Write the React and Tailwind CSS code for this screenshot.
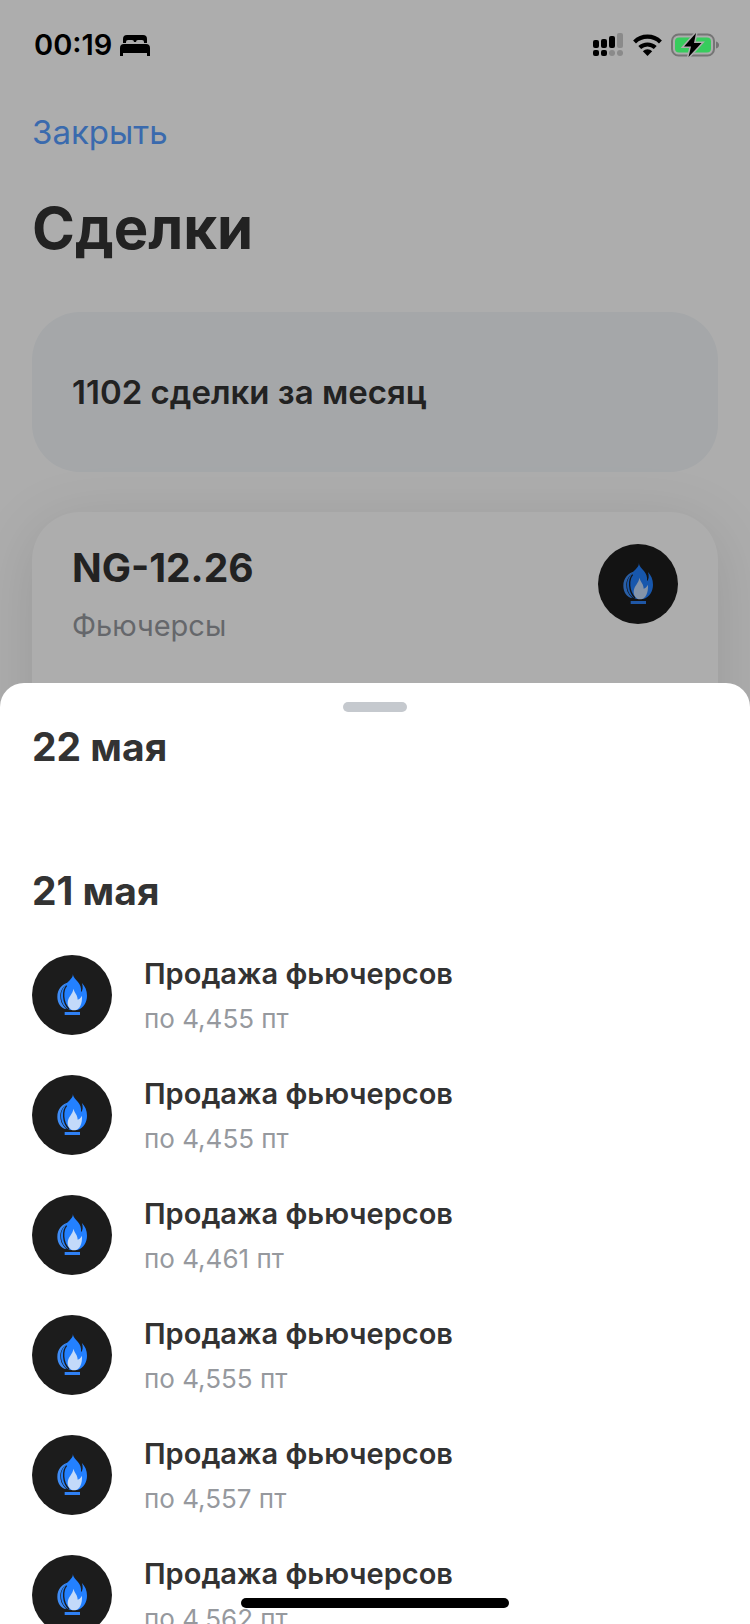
import React from 'react'

const deals = [
    { id: 1, title: 'Продажа фьючерсов', price: 'по 4,455 пт' },
    { id: 2, title: 'Продажа фьючерсов', price: 'по 4,455 пт' },
    { id: 3, title: 'Продажа фьючерсов', price: 'по 4,461 пт' },
    { id: 4, title: 'Продажа фьючерсов', price: 'по 4,555 пт' },
    { id: 5, title: 'Продажа фьючерсов', price: 'по 4,557 пт' },
    { id: 6, title: 'Продажа фьючерсов', price: 'по 4,562 пт' },
];

const GasLogo = () => (
    <svg viewBox="0 0 240 240" className="size-20 shrink-0" aria-hidden="true">
        <circle cx="120" cy="120" r="120" fill="#1c1c1c" />
        {/* outer tongue on the left */}
        <path d="M112 82C90 86 76 104 76 125C76 144 86 159 103 163C90 150 84 137 85 121C86 104 96 91 112 82Z" fill="#3f8cf5" />
        {/* main flame */}
        <path d="M122 57C127 74 88 86 87 122C87 143 98 160 116 165H136C154 159 165 142 165 122C165 106 159 94 150 84C154 97 152 107 147 112C151 82 127 78 122 57Z" fill="#2380ff" />
        <path d="M104 92C91 106 91 142 111 162" fill="none" stroke="#1c1c1c" strokeWidth="4" />
        {/* inner flame */}
        <path d="M124 101C123 117 107 126 107 144C107 155 114 163 122 166H130C143 162 151 148 150 122C146 129 142 133 137 134C137 120 128 114 124 101Z" fill="#c3dafa" />
        <rect x="98" y="171" width="46" height="9" fill="#2f80f5" />
    </svg>
);

const StatusBar = () => (
    <div className="absolute inset-x-0 top-0 z-30 flex items-center justify-between pt-[25px] pl-[34px] pr-[31px] text-black">
        <div className="flex items-center gap-2">
            <span className="text-[29px] leading-10 font-semibold">00:19</span>
            <svg width="30" height="21" viewBox="0 0 30 21" aria-hidden="true">
                <path d="M3 8V4Q3 0 7 0H23Q27 0 27 4V8H24V7Q24 5 22 5H18Q16 5 16 7H14Q14 5 12 5H8Q6 5 6 7V8Z" />
                <path d="M0 21V13Q0 9 4 9H26Q30 9 30 13V21H27V18H3V21Z" />
            </svg>
        </div>
        <div className="flex items-center gap-[9px]">
            <svg width="31" height="24" viewBox="0 0 31 24" aria-hidden="true">
                <rect x="0" y="7" width="6" height="8" rx="2" />
                <rect x="8" y="6" width="6" height="9" rx="2" />
                <rect x="16" y="3" width="6" height="12" rx="2" />
                <rect x="24" y="0" width="6" height="15" rx="2" fill="#8a8a8a" />
                <rect x="0" y="17" width="6" height="6" rx="2" />
                <rect x="8" y="17" width="6" height="6" rx="2" />
                <rect x="16" y="17" width="6" height="6" rx="3" fill="#8a8a8a" />
                <rect x="24" y="17" width="6" height="6" rx="3" fill="#8a8a8a" />
            </svg>
            <svg width="29" height="22" viewBox="0 0 28 21" fill="none" stroke="#000" strokeWidth="4" aria-hidden="true">
                <path d="M1.500 7.500A18 18 0 0 1 26.500 7.500" />
                <path d="M6.500 13A11 11 0 0 1 21.500 13" />
                <path d="M14 21L9.500 16.500A6.500 6.500 0 0 1 18.500 16.500Z" fill="#000" stroke="none" />
            </svg>
            <svg width="48" height="24" viewBox="0 0 48 24" aria-hidden="true">
                <rect x="1" y="1.500" width="42" height="21" rx="6.500" fill="none" stroke="#757575" strokeWidth="2" />
                <rect x="4" y="4.500" width="36" height="15" rx="4" fill="#37cc5d" />
                <path d="M45 8.500Q48 9.500 48 12T45 15.500Z" fill="#757575" />
                <path d="M25 0L13 13.500H20L17.500 24L30.500 10H23Z" fill="#000" stroke="#adadad" strokeWidth="3" paintOrder="stroke" />
            </svg>
        </div>
    </div>
);

const DealRow = ({ deal }) => (
    <li className="flex items-center gap-8">
        <GasLogo />
        <div className="pt-[2px]">
            <p className="text-[29px] leading-[46px] font-semibold text-[#333333]">{deal.title}</p>
            <p className="text-[26px] leading-[44px] text-[#96999e]">{deal.price}</p>
        </div>
    </li>
);

const App = () => {
    return (
        <div className="relative h-screen overflow-hidden bg-white font-['Inter','Liberation_Sans',sans-serif]">
            <StatusBar />

            <main className="px-8 pt-28">
                <button type="button" className="block text-[33px] leading-10 text-[#569cff]">Закрыть</button>
                <h1 className="mt-10 text-[58px] leading-[72px] font-bold text-[#333333]">Сделки</h1>

                <section className="mt-12 flex h-40 items-center rounded-[48px] bg-[#f3f7fa] px-10">
                    <p className="text-[33px] leading-10 font-semibold text-[#333333]">1102 сделки за месяц</p>
                </section>

                <section className="mt-10 flex h-80 items-start justify-between rounded-[48px] bg-white px-10 pt-8 shadow-[0_12px_64px_rgba(0,0,0,0.12)]">
                    <div>
                        <h2 className="text-[39px] leading-12 font-bold text-[#333333]">NG-12.26</h2>
                        <p className="mt-[14px] text-[29px] leading-10 text-[#96999e]">Фьючерсы</p>
                    </div>
                    <GasLogo />
                </section>
            </main>

            {/* Backdrop */}
            <div className="absolute inset-0 z-10 bg-black/32" />

            {/* Bottom sheet */}
            <div className="absolute inset-x-0 top-[683px] bottom-0 z-20 overflow-hidden rounded-t-3xl bg-white px-8 pt-[19px]">
                <div className="mx-auto h-[10px] w-16 rounded-full bg-[#c5c9ce]" />
                <h2 className="mt-[11px] text-[39px] leading-12 font-bold text-[#333333]">22 мая</h2>
                <h2 className="mt-24 text-[39px] leading-12 font-bold text-[#333333]">21 мая</h2>
                <ul className="mt-[34px] flex flex-col gap-7">
                    {deals.map((deal) => (
                        <DealRow key={deal.id} deal={deal} />
                    ))}
                </ul>
            </div>

            {/* Home indicator */}
            <div className="absolute bottom-4 left-1/2 z-30 h-[10px] w-67 -translate-x-1/2 rounded-full bg-black" />
        </div>
    );
};

export default App;
